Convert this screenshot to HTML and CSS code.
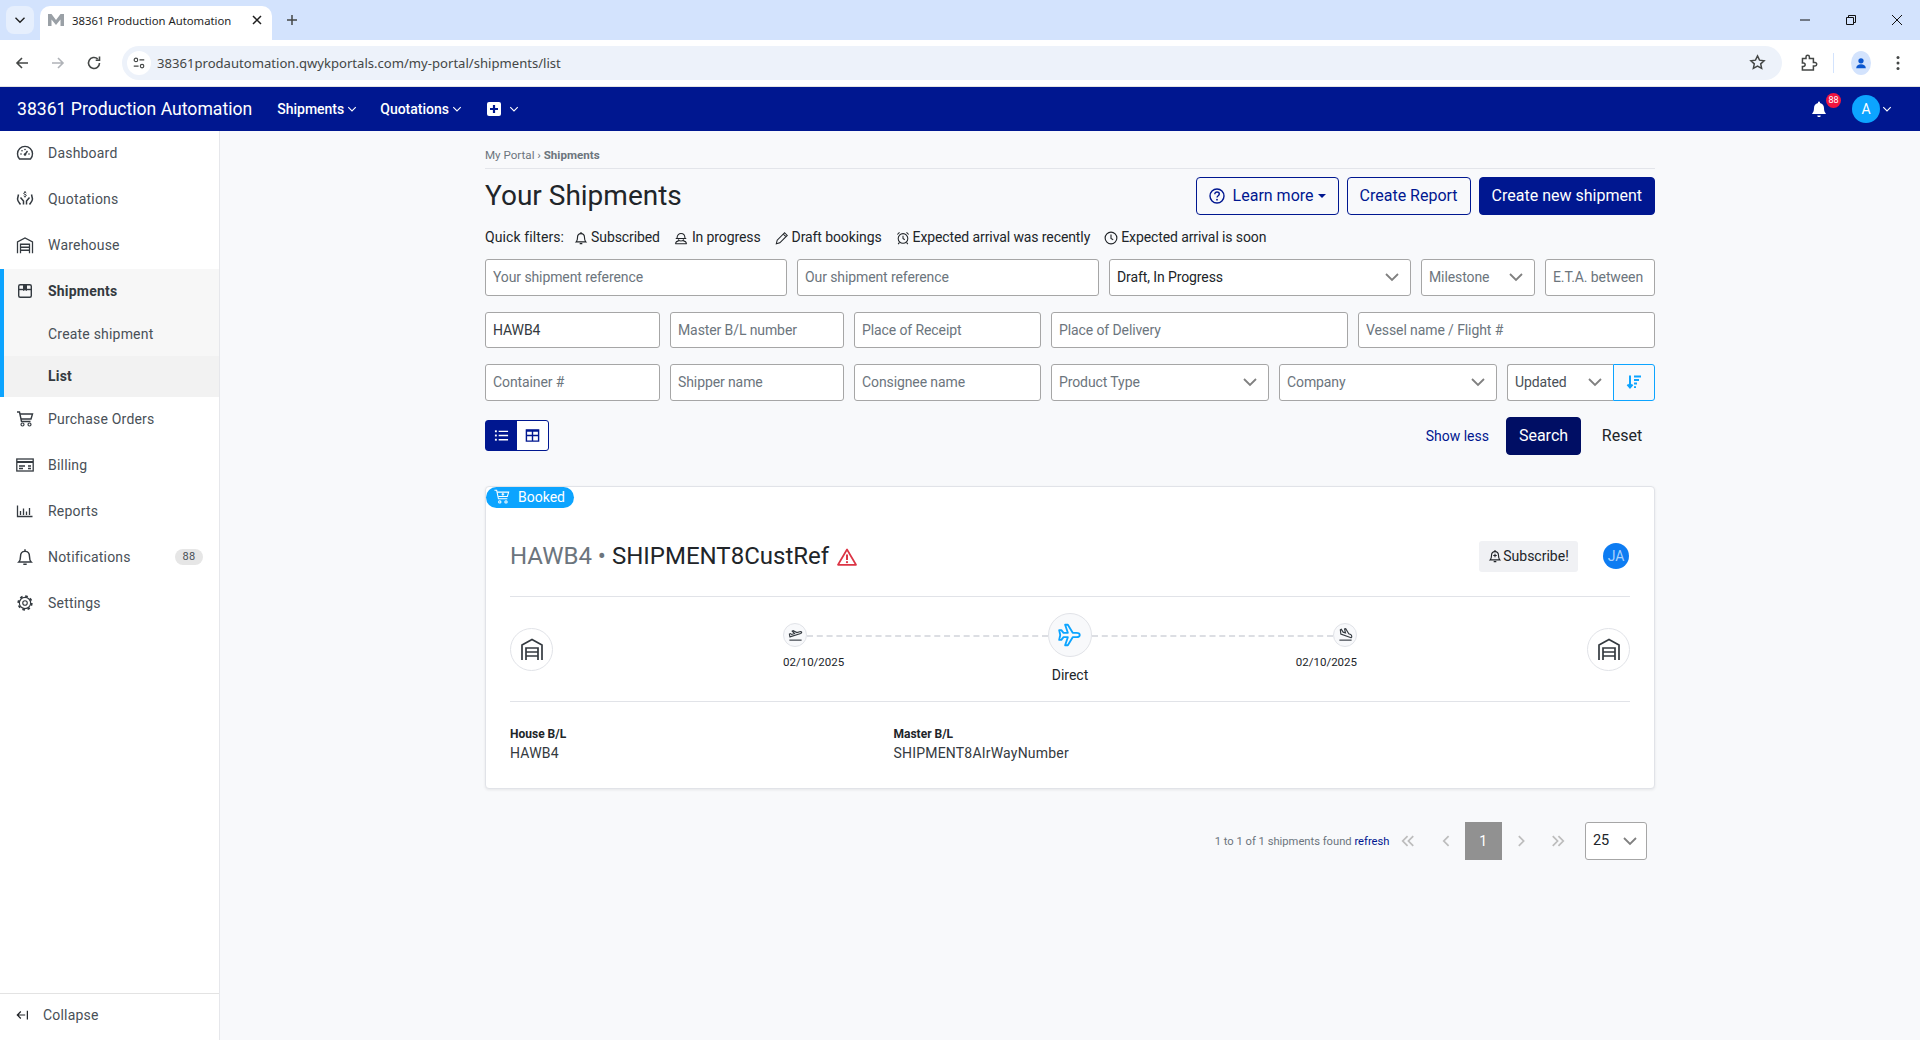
FILE: index.html
```html
<!DOCTYPE html>
<html lang="en">

<head>
    <meta charset="UTF-8">
    <meta name="viewport" content="width=device-width, initial-scale=1.0">
    <title>38361 Production Automation</title>
    <link rel="stylesheet" href="styles.css">
</head>

<body>
    <svg class="sprite" width="0" height="0">
        <symbol id="chev" viewBox="0 0 16 16"><path d="M2 5l6 6 6-6" fill="none" stroke="currentColor" stroke-width="1.8"/></symbol>
        <symbol id="warehouse" viewBox="0 0 24 24"><g fill="none" stroke="currentColor" stroke-width="1.7"><path d="M2 23V8l10-5.5L22 8v15"/><path d="M6 23V11h12v12M6 15h12M6 19h12"/></g></symbol>
        <symbol id="bell" viewBox="0 0 16 16"><g fill="none" stroke="currentColor" stroke-width="1.3"><path d="M2.5 12.5c1-1 1.5-2 1.5-5 0-2.8 1.800-4.500 4-4.500s4 1.700 4 4.500c0 3 .5 4 1.500 5z"/><path d="M6.500 14.500h3M8 1v2"/></g></symbol>
    </svg>

    <!-- browser bar -->
    <div class="tabstrip">
        <div class="tab-list"><svg class="ico-12"><use href="#chev"/></svg></div>
        <div class="tab">
            <svg class="tab-logo" viewBox="0 0 16 12"><path d="M0 12V0h3.500L8 6l4.500-6H16v12h-3.500V5.500L8 11 3.500 5.500V12z" fill="#9aa0a6"/></svg>
            <span class="tab-title">38361 Production Automation</span>
            <svg class="tab-close" viewBox="0 0 10 10"><path d="M1 1l8 8M9 1l-8 8" stroke="#1f1f1f" stroke-width="1.500"/></svg>
        </div>
        <svg class="tab-new" viewBox="0 0 12 12"><path d="M6 1v10M1 6h10" stroke="#444746" stroke-width="1.500"/></svg>
        <div class="win-btns">
            <svg viewBox="0 0 12 12"><path d="M1 6h10" stroke="#111" stroke-width="1"/></svg>
            <svg viewBox="0 0 12 12"><path d="M1.500 3.500h7v7h-7zM3.500 3.500v-2h7v7h-2" fill="none" stroke="#111" stroke-width="1"/></svg>
            <svg viewBox="0 0 12 12"><path d="M1 1l10 10M11 1L1 11" stroke="#111" stroke-width="1"/></svg>
        </div>
    </div>
    <div class="toolbar">
        <svg class="tool-ico" viewBox="0 0 16 16"><path d="M14 8H3M8 3L3 8l5 5" fill="none" stroke="#444746" stroke-width="1.600"/></svg>
        <svg class="tool-ico" viewBox="0 0 16 16"><path d="M2 8h11M8 3l5 5-5 5" fill="none" stroke="#b0b3b8" stroke-width="1.600"/></svg>
        <svg class="tool-ico" viewBox="0 0 16 16"><path d="M13.500 8A5.500 5.500 0 1 1 11.700 3.900M13.500 1.500v3.800H9.700" fill="none" stroke="#444746" stroke-width="1.600"/></svg>
        <div class="addressbar">
            <span class="site-btn"><svg viewBox="0 0 16 16"><g fill="none" stroke="#444746" stroke-width="1.300"><circle cx="4.500" cy="4.500" r="2"/><path d="M8.500 4.500H14M2 11.500h5.500"/><circle cx="11.500" cy="11.500" r="2"/></g></svg></span>
            <span class="url">38361prodautomation.qwykportals.com/my-portal/shipments/list</span>
            <svg class="star" viewBox="0 0 16 16"><path d="M8 1.800l1.900 4 4.300.5-3.200 3 .9 4.300L8 11.500l-3.900 2.100.9-4.300-3.200-3 4.300-.5z" fill="none" stroke="#444746" stroke-width="1.400"/></svg>
        </div>
        <svg class="puzzle" viewBox="0 0 18 18"><path d="M2.500 4.500h3.500V3a1.700 1.700 0 0 1 3.400 0v1.500h4v4H15a1.700 1.700 0 0 1 0 3.400h-1.600v4h-11v-3.500h1a1.500 1.500 0 0 0 0-3.500h-1z" fill="none" stroke="#444746" stroke-width="1.500"/></svg>
        <span class="tool-sep"></span>
        <span class="profile"><svg viewBox="0 0 16 16"><circle cx="8" cy="5.500" r="3" fill="#0b57d0"/><path d="M2.500 14c0-3 2.500-4.500 5.500-4.500s5.500 1.500 5.500 4.500z" fill="#0b57d0"/></svg></span>
        <svg class="dots" viewBox="0 0 4 16"><circle cx="2" cy="2.500" r="1.500" fill="#444746"/><circle cx="2" cy="8" r="1.500" fill="#444746"/><circle cx="2" cy="13.500" r="1.500" fill="#444746"/></svg>
    </div>

    <!-- app bar -->
    <header class="navbar">
        <span class="brand">38361 Production Automation</span>
        <span class="nav-link">Shipments<svg class="ico-10"><use href="#chev"/></svg></span>
        <span class="nav-link">Quotations<svg class="ico-10"><use href="#chev"/></svg></span>
        <span class="nav-link nav-plus">
            <svg class="plus-box" viewBox="0 0 14 14"><rect width="14" height="14" rx="2" fill="#fff"/><path d="M7 3v8M3 7h8" stroke="#001790" stroke-width="2.200"/></svg>
            <svg class="ico-10"><use href="#chev"/></svg>
        </span>
        <div class="nav-right">
            <span class="nav-bell">
                <svg viewBox="0 0 16 16"><path d="M8 .5a1 1 0 0 1 1 1v.6c2.500.5 4 2.400 4 5 0 3 .8 4.200 1.800 5.400v.5H1.200v-.5C2.200 11.300 3 10.100 3 7.100c0-2.600 1.500-4.500 4-5v-.6a1 1 0 0 1 1-1zM6.300 14.500h3.400a1.700 1.700 0 0 1-3.400 0z" fill="#fff"/></svg>
                <span class="nav-badge">88</span>
            </span>
            <span class="nav-avatar">A</span>
            <svg class="ico-10"><use href="#chev"/></svg>
        </div>
    </header>

    <div class="layout">
        <aside class="sidebar">
            <nav class="side-nav">
                <a class="side-item">
                    <svg viewBox="0 0 18 18"><g fill="none" stroke="currentColor" stroke-width="1.400"><path d="M3.500 15A7.500 7.500 0 1 1 14.500 15z"/><path d="M9 10.500l2.500-3.500"/></g><g fill="currentColor"><circle cx="9" cy="10.500" r="1.300"/><circle cx="5" cy="10" r=".8"/><circle cx="6" cy="6.800" r=".8"/><circle cx="9" cy="5.500" r=".8"/><circle cx="13" cy="10" r=".8"/></g></svg>
                    Dashboard
                </a>
                <a class="side-item">
                    <svg viewBox="0 0 18 18"><g fill="none" stroke="currentColor" stroke-width="1.500"><path d="M2.500 4.500L1.500 9c0 2 1.500 3.500 3 5.500M15.500 4.500l1 4.500c0 2-1.500 3.500-3 5.500"/><path d="M4.500 7.500L7.500 11v3.500M13.500 7.500L10.500 11v3.500"/><path d="M10.300 3c-.5-.8-2.600-.8-2.600.4 0 1.300 2.600.7 2.600 2 0 1.200-2.100 1.200-2.600.4M9 1v1.500M9 6v1.500" stroke-width="1"/></g></svg>
                    Quotations
                </a>
                <a class="side-item">
                    <svg><use href="#warehouse"/></svg>
                    Warehouse
                </a>
                <div class="side-group">
                    <a class="side-item is-open">
                        <svg viewBox="0 0 18 18"><rect x="2.700" y="2.700" width="12.600" height="12.600" rx="1.500" fill="none" stroke="currentColor" stroke-width="1.400"/><path d="M2.700 7.500h12.600" stroke="currentColor" stroke-width="1.400"/><path d="M7 3h4v6L9 8 7 9z" fill="currentColor"/></svg>
                        Shipments
                    </a>
                    <a class="side-sub">Create shipment</a>
                    <a class="side-sub is-active">List</a>
                </div>
                <a class="side-item">
                    <svg viewBox="0 0 18 18"><g fill="none" stroke="currentColor" stroke-width="1.400"><path d="M1 2h2.500l2 9.500h9"/><path d="M4 4h12.500l-1.500 5H5"/></g><circle cx="6.500" cy="14.500" r="1.500" fill="none" stroke="currentColor" stroke-width="1.200"/><circle cx="13.500" cy="14.500" r="1.500" fill="none" stroke="currentColor" stroke-width="1.200"/></svg>
                    Purchase Orders
                </a>
                <a class="side-item">
                    <svg viewBox="0 0 18 18"><g fill="none" stroke="currentColor" stroke-width="1.300"><rect x=".8" y="3" width="16.400" height="12"/><path d="M1 6h16" stroke-width="2"/><path d="M3 10h6M3 12.500h4M12 10h3M12 12.500h3"/></g></svg>
                    Billing
                </a>
                <a class="side-item">
                    <svg viewBox="0 0 18 18"><g fill="none" stroke="currentColor" stroke-width="1.300"><path d="M1.500 3.500v11h15" /><path d="M4.500 13V9M7.500 13V6.500M10.500 13V9.500M13.500 13V6"/></g></svg>
                    Reports
                </a>
                <a class="side-item">
                    <svg><use href="#bell"/></svg>
                    Notifications
                    <span class="side-badge">88</span>
                </a>
                <a class="side-item">
                    <svg viewBox="0 0 24 24"><circle cx="12" cy="12" r="9" fill="none" stroke="currentColor" stroke-width="2.400" stroke-dasharray="3.500 3.570"/><circle cx="12" cy="12" r="7.500" fill="#fff" stroke="currentColor" stroke-width="1.500"/><circle cx="12" cy="12" r="3" fill="none" stroke="currentColor" stroke-width="1.500"/></svg>
                    Settings
                </a>
            </nav>
            <div class="side-collapse">
                <svg viewBox="0 0 16 16"><path d="M13 3v10M10.500 8H1.500M5.500 4l-4 4 4 4" fill="none" stroke="currentColor" stroke-width="1.400"/></svg>
                Collapse
            </div>
        </aside>

        <main class="content">
            <div class="breadcrumb">My Portal › <b>Shipments</b></div>

            <div class="page-head">
                <h1>Your Shipments</h1>
                <div class="head-btns">
                    <button class="btn btn-line">
                        <svg viewBox="0 0 16 16"><circle cx="8" cy="8" r="7" fill="none" stroke="currentColor" stroke-width="1.400"/><path d="M5.800 6.200c0-3 4.500-2.800 4.500-.1 0 1.700-2.300 1.700-2.300 3.500" fill="none" stroke="currentColor" stroke-width="1.400"/><circle cx="8" cy="11.700" r=".9" fill="currentColor"/></svg>
                        Learn more<span class="caret"></span>
                    </button>
                    <button class="btn btn-line">Create Report</button>
                    <button class="btn btn-solid">Create new shipment</button>
                </div>
            </div>

            <div class="quick">
                <span class="quick-label">Quick filters:</span>
                <span class="quick-item"><svg><use href="#bell"/></svg>Subscribed</span>
                <span class="quick-item"><svg class="wide-gap" viewBox="0 0 16 16"><g fill="none" stroke="currentColor" stroke-width="1.200"><path d="M3.500 8c0-7 9-7 9 0M2 8.500h12M5 9.500c.5 2.500 5.500 2.500 6 0M1.500 14.500c.5-2.500 2-3 4-3.500M14.500 14.500c-.5-2.500-2-3-4-3.500M1.500 14.500h13"/></g></svg>In progress</span>
                <span class="quick-item"><svg viewBox="0 0 16 16"><path d="M11 2l3 3-8.500 8.500-4 1 1-4zM9.500 3.500l3 3" fill="none" stroke="currentColor" stroke-width="1.200"/></svg>Draft bookings</span>
                <span class="quick-item"><svg viewBox="0 0 16 16"><g fill="none" stroke="currentColor" stroke-width="1.200"><circle cx="8" cy="8.500" r="5.500"/><path d="M8 5.500v3l2 1.500M1.500 4L4 1.500M14.500 4L12 1.500M4 13l-1.500 2M12 13l1.500 2"/></g></svg>Expected arrival was recently</span>
                <span class="quick-item"><svg viewBox="0 0 16 16"><g fill="none" stroke="currentColor" stroke-width="1.300"><circle cx="8" cy="8" r="6.700"/><path d="M8 4v4.500l2.500 1.500"/></g></svg>Expected arrival is soon</span>
            </div>

            <div class="filters">
                <div class="filter-row row-a">
                    <input class="field" placeholder="Your shipment reference">
                    <input class="field" placeholder="Our shipment reference">
                    <div class="field select has-value">Draft, In Progress<svg><use href="#chev"/></svg></div>
                    <div class="field select">Milestone<svg><use href="#chev"/></svg></div>
                    <input class="field" placeholder="E.T.A. between">
                </div>
                <div class="filter-row row-b">
                    <input class="field" value="HAWB4">
                    <input class="field" placeholder="Master B/L number">
                    <input class="field" placeholder="Place of Receipt">
                    <input class="field" placeholder="Place of Delivery">
                    <input class="field" placeholder="Vessel name / Flight #">
                </div>
                <div class="filter-row row-c">
                    <input class="field" placeholder="Container #">
                    <input class="field" placeholder="Shipper name">
                    <input class="field" placeholder="Consignee name">
                    <div class="field select">Product Type<svg><use href="#chev"/></svg></div>
                    <div class="field select">Company<svg><use href="#chev"/></svg></div>
                    <div class="sort-group">
                        <div class="field select">Updated<svg><use href="#chev"/></svg></div>
                        <span class="sort-btn"><svg viewBox="0 0 16 16"><g fill="none" stroke="currentColor" stroke-width="2"><path d="M4 1.500v12M1.500 10.500L4 13.500l2.500-3M8 2.500h7M8 6h5M8 9.500h3"/></g><path d="M8 12.200h2v1.800H8z" fill="currentColor"/></svg></span>
                    </div>
                </div>
            </div>

            <div class="actions">
                <div class="view-toggle">
                    <span class="view-btn is-on"><svg viewBox="0 0 16 16"><g fill="none" stroke="currentColor" stroke-width="1.400"><path d="M5 3.500h10M5 8h10M5 12.500h10"/></g><g fill="currentColor"><rect x="1" y="2.500" width="2" height="2"/><rect x="1" y="7" width="2" height="2"/><rect x="1" y="11.500" width="2" height="2"/></g></svg></span>
                    <span class="view-btn"><svg viewBox="0 0 16 16"><path d="M1.500 2h13v12h-13zM1.500 8h13M8 2v12" fill="none" stroke="currentColor" stroke-width="1.500"/><path d="M1.500 2h13v2h-13z" fill="currentColor"/></svg></span>
                </div>
                <a class="show-less">Show less</a>
                <button class="btn btn-search">Search</button>
                <button class="btn btn-reset">Reset</button>
            </div>

            <section class="card">
                <span class="status">
                    <svg viewBox="0 0 18 18"><g fill="none" stroke="#fff" stroke-width="1.200"><path d="M.5 1.500h2.500l2 9.500h10"/><path d="M3.500 3.500h13l-1.500 5H4.800"/><path d="M10 4.500v3M8.500 6h3"/><circle cx="6.500" cy="14.500" r="1.300"/><circle cx="13.500" cy="14.500" r="1.300"/></g></svg>
                    Booked
                </span>

                <div class="card-head">
                    <h2><span class="muted">HAWB4 •</span> SHIPMENT8CustRef</h2>
                    <svg class="warn" viewBox="0 0 20 18"><path d="M10 1.500L1 16.800h18z" fill="none" stroke="#dc3545" stroke-width="1.700" stroke-linejoin="round"/><path d="M10 6.500v5.500" stroke="#dc3545" stroke-width="2"/><circle cx="10" cy="14.200" r="1.100" fill="#dc3545"/></svg>
                    <span class="subscribe">
                        <svg viewBox="0 0 16 16"><use href="#bell"/><path d="M8 5.500v4M6 7.500h4" stroke="currentColor" stroke-width="1.200"/></svg>
                        Subscribe!
                    </span>
                    <span class="owner">JA</span>
                </div>

                <div class="route">
                    <span class="place"><svg><use href="#warehouse"/></svg></span>
                    <div class="legs">
                        <div class="stop">
                            <span class="stop-dot"><svg viewBox="0 0 16 16"><g fill="none" stroke="currentColor" stroke-width="1.200"><path d="M1.500 14h13"/><path d="M2 10.500l11.500-3.500c2-1 1-2.500-1-2l-3 1-4-2-1 .5L7 7 4 8 2.500 7l-1 .5z"/></g></svg></span>
                            <span class="stop-date">02/10/2025</span>
                        </div>
                        <span class="dash"></span>
                        <div class="mode">
                            <span class="mode-dot"><svg viewBox="0 0 24 24"><path d="M21 12c0-1.500-1.500-2-3-2h-3.500L10 2.500H7.500L10 10H6L4 7.500H2L3 12l-1 4.500h2L6 14h4l-2.500 7.500H10l4.500-7.500H18c1.500 0 3-.5 3-2z" fill="none" stroke="currentColor" stroke-width="1.700" stroke-linejoin="round"/></svg></span>
                            <span class="mode-name">Direct</span>
                        </div>
                        <span class="dash"></span>
                        <div class="stop stop-end">
                            <span class="stop-dot"><svg viewBox="0 0 16 16"><g fill="none" stroke="currentColor" stroke-width="1.200"><path d="M1.500 14h13"/><path d="M14 11.500L3 7.500 2.500 3l1-.5 2 3 2.500.8L7 2l1.200-.2 3.300 5.500 2 .8c1.500.8 1.500 3 .5 3.400z"/></g></svg></span>
                            <span class="stop-date">02/10/2025</span>
                        </div>
                    </div>
                    <span class="place"><svg><use href="#warehouse"/></svg></span>
                </div>

                <dl class="refs">
                    <div>
                        <dt>House B/L</dt>
                        <dd>HAWB4</dd>
                    </div>
                    <div>
                        <dt>Master B/L</dt>
                        <dd>SHIPMENT8AIrWayNumber</dd>
                    </div>
                </dl>
            </section>

            <div class="pager">
                <span class="pager-info">1 to 1 of 1 shipments found <a>refresh</a></span>
                <span class="page-btn"><svg viewBox="0 0 16 16"><path d="M7.500 2.500L2 8l5.500 5.500M14 2.500L8.500 8l5.500 5.500" fill="none" stroke="currentColor" stroke-width="2"/></svg></span>
                <span class="page-btn"><svg viewBox="0 0 16 16"><path d="M11 2.500L5.500 8l5.500 5.500" fill="none" stroke="currentColor" stroke-width="2"/></svg></span>
                <span class="page-btn is-current">1</span>
                <span class="page-btn"><svg viewBox="0 0 16 16"><path d="M5.500 2.500L11 8l-5.500 5.500" fill="none" stroke="currentColor" stroke-width="2"/></svg></span>
                <span class="page-btn"><svg viewBox="0 0 16 16"><path d="M2 2.500L7.500 8 2 13.500M8.500 2.500L14 8l-5.500 5.500" fill="none" stroke="currentColor" stroke-width="2"/></svg></span>
                <div class="field select has-value page-size">25<svg><use href="#chev"/></svg></div>
            </div>
        </main>
    </div>
</body>

</html>
```

FILE: styles.css
```css
* {
    box-sizing: border-box;
}

html,
body {
    margin: 0;
    height: 100%;
}

body {
    display: flex;
    flex-direction: column;
    height: 1040px;
    overflow: hidden;
    font-family: Roboto, "Liberation Sans", sans-serif;
    font-size: 14px;
    color: #212529;
    background-color: #f8f9fb;
}

.sprite {
    position: absolute;
}

.ico-10 {
    width: 10px;
    height: 10px;
}

.ico-12 {
    width: 12px;
    height: 12px;
}

/* browser bar */
.tabstrip {
    display: flex;
    align-items: flex-end;
    flex: 0 0 40px;
    padding-left: 6px;
    background-color: #d3e3fd;
}

.tab-list {
    display: flex;
    align-items: center;
    justify-content: center;
    width: 28px;
    height: 28px;
    margin-bottom: 6px;
    border-radius: 8px;
    background-color: #e6effd;
    color: #1f1f1f;
}

.tab {
    display: flex;
    align-items: center;
    width: 232px;
    height: 34px;
    margin-left: 6px;
    padding: 0 10px 6px 8px;
    border-radius: 10px 10px 0 0;
    background-color: #fff;
}

.tab-logo {
    width: 16px;
    height: 12px;
}

.tab-title {
    flex: 1;
    margin-left: 8px;
    font-family: "Noto Sans", sans-serif;
    font-size: 11.300px;
    color: #1f1f1f;
    white-space: nowrap;
}

.tab-close {
    width: 10px;
    height: 10px;
}

.tab-new {
    width: 12px;
    height: 12px;
    margin: 0 0 14px 14px;
}

.win-btns {
    display: flex;
    gap: 34px;
    margin: 0 17px 14px auto;
}

.win-btns svg {
    width: 12px;
    height: 12px;
}

.toolbar {
    display: flex;
    align-items: center;
    flex: 0 0 47px;
    padding: 0 0 1px 14px;
    border-bottom: 1px solid #e3e3e3;
    background-color: #fff;
}

.tool-ico {
    width: 16px;
    height: 16px;
    margin-right: 20px;
}

.addressbar {
    display: flex;
    align-items: center;
    width: 1660px;
    height: 34px;
    padding: 0 16px 0 5px;
    border-radius: 17px;
    background-color: #edf2fa;
}

.site-btn {
    display: flex;
    align-items: center;
    justify-content: center;
    width: 24px;
    height: 24px;
    border-radius: 50%;
    background-color: #fff;
}

.site-btn svg {
    width: 14px;
    height: 14px;
}

.url {
    flex: 1;
    margin-left: 6px;
    font-family: "Noto Sans", sans-serif;
    font-size: 13.100px;
    color: #444746;
}

.star {
    width: 17px;
    height: 17px;
}

.puzzle {
    width: 18px;
    height: 18px;
    margin-left: 18px;
}

.tool-sep {
    width: 1px;
    height: 20px;
    margin-left: 15px;
    background-color: #d3e3fd;
}

.profile {
    display: flex;
    align-items: center;
    justify-content: center;
    width: 20px;
    height: 24px;
    margin-left: 17px;
    border-radius: 50%;
    background-color: #d3e3fd;
}

.profile svg {
    width: 14px;
    height: 14px;
}

.dots {
    width: 4px;
    height: 16px;
    margin-left: 25px;
}

/* app bar */
.navbar {
    display: flex;
    align-items: center;
    flex: 0 0 44px;
    padding: 0 28px 0 17px;
    background-color: #001790;
    color: #fff;
}

.brand {
    margin-right: 25px;
    font-size: 17.600px;
}

.nav-link {
    display: flex;
    align-items: center;
    gap: 3px;
    margin-right: 23px;
    font-size: 14px;
    font-weight: 500;
}

.nav-plus {
    gap: 8px;
    margin-left: 2px;
}

.plus-box {
    width: 14px;
    height: 14px;
}

.nav-right {
    display: flex;
    align-items: center;
    margin-left: auto;
    gap: 2px;
}

.nav-bell {
    position: relative;
    width: 16px;
    height: 16px;
    margin-right: 23px;
}

.nav-bell svg {
    display: block;
    width: 16px;
    height: 16px;
}

.nav-badge {
    position: absolute;
    top: -8px;
    left: 15px;
    width: 15px;
    height: 15px;
    border-radius: 50%;
    background-color: #f0153f;
    font-size: 9px;
    line-height: 15px;
    text-align: center;
}

.nav-avatar {
    display: flex;
    align-items: center;
    justify-content: center;
    width: 28px;
    height: 28px;
    border-radius: 50%;
    background-color: #0ca4ff;
    font-size: 14px;
}

/* sidebar */
.layout {
    display: flex;
    flex: 1;
    min-height: 0;
}

.sidebar {
    display: flex;
    flex-direction: column;
    flex: 0 0 220px;
    border-right: 1px solid #e6e7eb;
    background-color: #fff;
    color: #495057;
    letter-spacing: .2px;
}

.side-nav {
    flex: 1;
}

.side-item {
    display: flex;
    align-items: center;
    height: 46px;
    padding: 0 0 2px 16px;
}

.side-item svg {
    width: 18px;
    height: 18px;
    margin-right: 14px;
    color: #343a40;
}

.side-group {
    border-left: 4px solid #0ca4ff;
    background-color: #f7f7f7;
}

.side-group .side-item {
    padding-left: 12px;
}

.is-open {
    font-weight: 700;
    color: #343a40;
}

.side-sub {
    display: flex;
    align-items: center;
    height: 41px;
    padding: 0 0 2px 44px;
}

.side-item + .side-sub {
    padding-bottom: 4px;
}

.side-sub.is-active {
    background-color: #f2f2f2;
    font-weight: 700;
    color: #343a40;
}

.side-badge {
    margin: 0 16px 0 auto;
    width: 28px;
    height: 16px;
    border-radius: 8px;
    background-color: #e6e6e6;
    font-size: 11px;
    line-height: 16px;
    text-align: center;
}

.side-collapse {
    display: flex;
    align-items: center;
    flex: 0 0 47px;
    padding: 0 0 4px 16px;
    border-top: 1px solid #e3e3e3;
}

.side-collapse svg {
    width: 14px;
    height: 14px;
    margin-right: 13px;
    color: #212529;
}

/* page */
.content {
    flex: 0 0 1170px;
    margin: 0 auto;
}

.breadcrumb {
    padding: 15px 0 4px;
    border-bottom: 1px solid #e3e5ea;
    font-size: 11.600px;
    line-height: 18px;
    color: #6c757d;
}

.page-head {
    display: flex;
    align-items: center;
    justify-content: space-between;
    margin-top: 8px;
}

h1 {
    margin: 0 0 2px;
    font-size: 28px;
    font-weight: 400;
}

.head-btns {
    display: flex;
    gap: 8px;
}

.btn {
    display: inline-flex;
    align-items: center;
    justify-content: center;
    height: 38px;
    padding: 0 12px 1px;
    border: 1px solid #001790;
    border-radius: 4px;
    font-family: inherit;
    font-size: 16px;
}

.btn-line {
    background-color: transparent;
    color: #001790;
}

.btn-line svg {
    width: 16px;
    height: 16px;
    margin-right: 8px;
}

.caret {
    width: 0;
    height: 0;
    margin-left: 4px;
    border-top: 4px solid currentColor;
    border-left: 4px solid transparent;
    border-right: 4px solid transparent;
}

.btn-solid {
    background-color: #001790;
    color: #fff;
}

.quick {
    display: flex;
    align-items: center;
    margin-top: 12px;
    line-height: 21px;
    letter-spacing: -.1px;
}

.quick-label {
    margin-right: 10px;
    letter-spacing: .1px;
}

.quick-item {
    display: flex;
    align-items: center;
    margin-right: 14px;
}

.quick-item svg {
    width: 14px;
    height: 14px;
    margin-right: 3px;
}

.quick-item .wide-gap {
    margin-right: 4px;
}

/* filters */
.filters {
    display: flex;
    flex-direction: column;
    gap: 16px;
    margin-top: 11px;
}

.filter-row {
    display: grid;
    gap: 10px;
}

.row-a {
    grid-template-columns: 302px 302px 302px 114px 1fr;
}

.row-b {
    grid-template-columns: 175px 174px 187px 297px 1fr;
}

.row-c {
    grid-template-columns: 175px 174px 187px 218px 218px 1fr;
}

.field {
    width: 100%;
    height: 36.500px;
    padding: 0 7px;
    border: 1px solid #a6a6a6;
    border-radius: 3px;
    background-color: #fff;
    font-family: inherit;
    font-size: 14px;
    letter-spacing: -.1px;
    color: #343a40;
    outline: none;
}

.field::placeholder {
    color: #6c757d;
    opacity: 1;
}

.select {
    display: flex;
    align-items: center;
    justify-content: space-between;
    color: #6c757d;
}

.select svg {
    width: 16px;
    height: 16px;
    margin-right: 3px;
    color: #808080;
}

.select.has-value {
    color: #212529;
}

.sort-group {
    display: flex;
}

.sort-group .select {
    flex: 1;
    border-radius: 3px 0 0 3px;
    border-right: 0;
    color: #495057;
}

.sort-btn {
    display: flex;
    align-items: center;
    justify-content: center;
    flex: 0 0 42px;
    border: 1px solid #0ca4ff;
    border-radius: 0 3px 3px 0;
    color: #0ca4ff;
}

.sort-btn svg {
    width: 16px;
    height: 16px;
}

.actions {
    display: flex;
    align-items: center;
    margin-top: 16px;
}

.view-toggle {
    display: flex;
    height: 31px;
    border: 1px solid #001790;
    border-radius: 3px;
    background-color: #fff;
    color: #001790;
}

.view-btn {
    display: flex;
    align-items: center;
    justify-content: center;
    width: 31px;
}

.view-btn svg {
    width: 15px;
    height: 15px;
}

.view-btn.is-on {
    background-color: #001790;
    color: #fff;
}

.show-less {
    margin: 0 17px 0 auto;
    color: #001790;
}

.btn-search {
    width: 75px;
    border-color: #000e64;
    background-color: #000e64;
    color: #fff;
}

.btn-reset {
    width: 66px;
    margin-left: 8px;
    border: 0;
    background: none;
    color: #212529;
}

/* shipment card */
.card {
    position: relative;
    height: 303px;
    margin-top: 31px;
    padding: 0 24px;
    border: 1px solid #e1e3e8;
    border-radius: 4px;
    background-color: #fff;
    box-shadow: 0 1px 3px rgba(0, 0, 0, .08);
}

.status {
    position: absolute;
    top: 0;
    left: 0;
    display: flex;
    align-items: center;
    width: 88px;
    height: 21px;
    padding-left: 8px;
    border-radius: 11px;
    background-color: #0ca4ff;
    color: #fff;
}

.status svg {
    width: 16px;
    height: 16px;
    margin-right: 8px;
}

.card-head {
    display: flex;
    align-items: center;
    padding: 54px 0 24px;
    border-bottom: 1px solid #e1e3e8;
}

h2 {
    margin: 0;
    font-size: 24px;
    font-weight: 400;
}

.muted {
    color: #6c757d;
}

.warn {
    width: 20px;
    height: 18px;
    margin: 2px 0 0 8px;
}

.subscribe {
    display: flex;
    align-items: center;
    justify-content: center;
    width: 99px;
    height: 31px;
    margin: 0 25px 0 auto;
    border-radius: 3px;
    background-color: #f0f1f4;
}

.subscribe svg {
    width: 14px;
    height: 14px;
    margin-right: 1px;
}

.owner {
    display: flex;
    align-items: center;
    justify-content: center;
    width: 26px;
    height: 26px;
    margin-right: 1px;
    border-radius: 50%;
    background-color: #0d7cf2;
    font-size: 14px;
    color: #a9d2fb;
}

.route {
    display: flex;
    justify-content: space-between;
    height: 105px;
    padding-top: 16px;
    border-bottom: 1px solid #e1e3e8;
}

.place {
    display: flex;
    align-items: center;
    justify-content: center;
    width: 43px;
    height: 43px;
    margin-top: 15px;
    border: 1px solid #e1e3e8;
    border-radius: 50%;
}

.place svg {
    width: 24px;
    height: 24px;
    color: #343a40;
}

.legs {
    display: flex;
    align-items: flex-start;
    width: 574px;
}

.stop {
    display: flex;
    flex-direction: column;
    flex: 0 0 24px;
    min-width: 0;
    margin-top: 10px;
}

.stop-end {
    align-items: flex-end;
}

.stop-dot {
    display: flex;
    flex: none;
    align-items: center;
    justify-content: center;
    width: 24px;
    height: 24px;
    border: 1px solid #e1e3e8;
    border-radius: 50%;
    background-color: #f8f9fb;
    color: #343a40;
}

.stop-dot svg {
    width: 15px;
    height: 15px;
}

.stop-date {
    margin-top: 8px;
    font-size: 11.500px;
    line-height: 14px;
    white-space: nowrap;
}

.dash {
    flex: 1;
    margin-top: 22px;
    border-top: 2px dashed #dcdee3;
}

.mode {
    display: flex;
    flex-direction: column;
    align-items: center;
    flex: 0 0 44px;
}

.mode-dot {
    display: flex;
    flex: none;
    align-items: center;
    justify-content: center;
    width: 44px;
    height: 44px;
    border: 1px solid #e1e3e8;
    border-radius: 50%;
    background-color: #f8f9fb;
    color: #0ca4ff;
}

.mode-dot svg {
    width: 26px;
    height: 26px;
}

.mode-name {
    margin-top: 8px;
    line-height: 20px;
}

.refs {
    display: grid;
    grid-template-columns: 383.500px 1fr;
    margin: 23px 0 0;
}

dt {
    font-size: 12px;
    font-weight: 700;
    line-height: 18px;
}

dd {
    margin: 0;
    line-height: 21px;
    letter-spacing: .2px;
    color: #343a40;
}

/* pager */
.pager {
    display: flex;
    align-items: center;
    justify-content: flex-end;
    margin-top: 33px;
    padding-right: 8px;
}

.pager-info {
    padding-top: 2px;
    font-size: 11.200px;
    color: #6c757d;
}

.pager-info a {
    color: #001790;
}

.page-btn {
    display: flex;
    align-items: center;
    justify-content: center;
    width: 37.500px;
    height: 38px;
    color: #bdbdbd;
}

.page-btn svg {
    width: 14px;
    height: 14px;
}

.page-btn.is-current {
    background-color: #919191;
    color: #fff;
}

.page-size {
    width: 62px;
    height: 38px;
    margin-left: 8px;
    font-size: 14.500px;
}

.page-size svg {
    margin-right: 1px;
}
```
